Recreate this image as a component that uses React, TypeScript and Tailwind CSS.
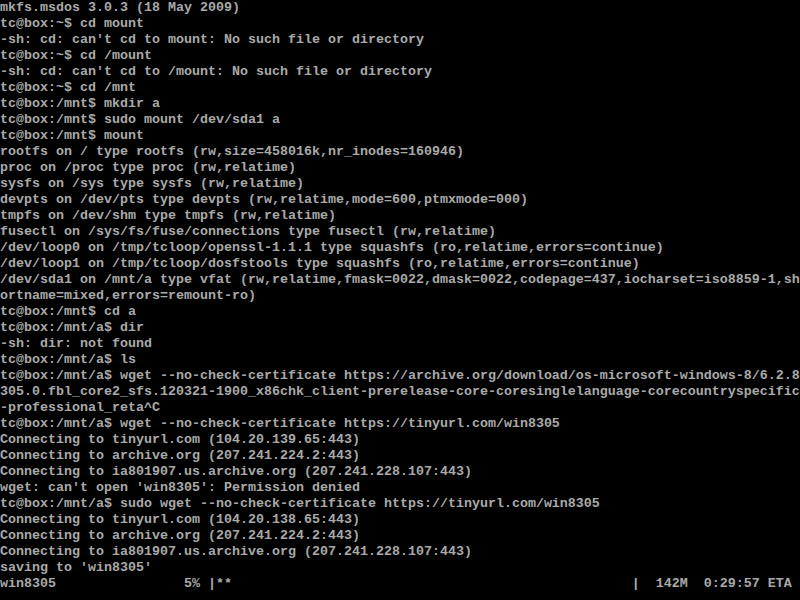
const pad = (s: string, col: number) => s + " ".repeat(Math.max(0, col - s.length));

// wget progress bar: columns are fixed like the console's 8px grid
const progress = (() => {
  let s = pad("win8305", 23) + "5% |**";
  s = pad(s, 79) + "|";
  s = pad(s, 82) + "142M";
  s = pad(s, 88) + "0:29:57 ETA";
  return s;
})();

const lines: string[] = [
  "mkfs.msdos 3.0.3 (18 May 2009)",
  "tc@box:~$ cd mount",
  "-sh: cd: can't cd to mount: No such file or directory",
  "tc@box:~$ cd /mount",
  "-sh: cd: can't cd to /mount: No such file or directory",
  "tc@box:~$ cd /mnt",
  "tc@box:/mnt$ mkdir a",
  "tc@box:/mnt$ sudo mount /dev/sda1 a",
  "tc@box:/mnt$ mount",
  "rootfs on / type rootfs (rw,size=458016k,nr_inodes=160946)",
  "proc on /proc type proc (rw,relatime)",
  "sysfs on /sys type sysfs (rw,relatime)",
  "devpts on /dev/pts type devpts (rw,relatime,mode=600,ptmxmode=000)",
  "tmpfs on /dev/shm type tmpfs (rw,relatime)",
  "fusectl on /sys/fs/fuse/connections type fusectl (rw,relatime)",
  "/dev/loop0 on /tmp/tcloop/openssl-1.1.1 type squashfs (ro,relatime,errors=continue)",
  "/dev/loop1 on /tmp/tcloop/dosfstools type squashfs (ro,relatime,errors=continue)",
  "/dev/sda1 on /mnt/a type vfat (rw,relatime,fmask=0022,dmask=0022,codepage=437,iocharset=iso8859-1,sh",
  "ortname=mixed,errors=remount-ro)",
  "tc@box:/mnt$ cd a",
  "tc@box:/mnt/a$ dir",
  "-sh: dir: not found",
  "tc@box:/mnt/a$ ls",
  "tc@box:/mnt/a$ wget --no-check-certificate https://archive.org/download/os-microsoft-windows-8/6.2.8",
  "305.0.fbl_core2_sfs.120321-1900_x86chk_client-prerelease-core-coresinglelanguage-corecountryspecific",
  "-professional_reta^C",
  "tc@box:/mnt/a$ wget --no-check-certificate https://tinyurl.com/win8305",
  "Connecting to tinyurl.com (104.20.139.65:443)",
  "Connecting to archive.org (207.241.224.2:443)",
  "Connecting to ia801907.us.archive.org (207.241.228.107:443)",
  "wget: can't open 'win8305': Permission denied",
  "tc@box:/mnt/a$ sudo wget --no-check-certificate https://tinyurl.com/win8305",
  "Connecting to tinyurl.com (104.20.138.65:443)",
  "Connecting to archive.org (207.241.224.2:443)",
  "Connecting to ia801907.us.archive.org (207.241.228.107:443)",
  "saving to 'win8305'",
  progress,
];

export default function App() {
  return (
    <div className="h-[600px] w-[800px] overflow-hidden bg-black text-[#aaaaaa] font-['Liberation_Mono',monospace] text-[13.333px] font-bold leading-4">
      {lines.map((line, i) => (
        <div key={i} className="h-4 whitespace-pre">
          {line}
        </div>
      ))}
    </div>
  );
}
